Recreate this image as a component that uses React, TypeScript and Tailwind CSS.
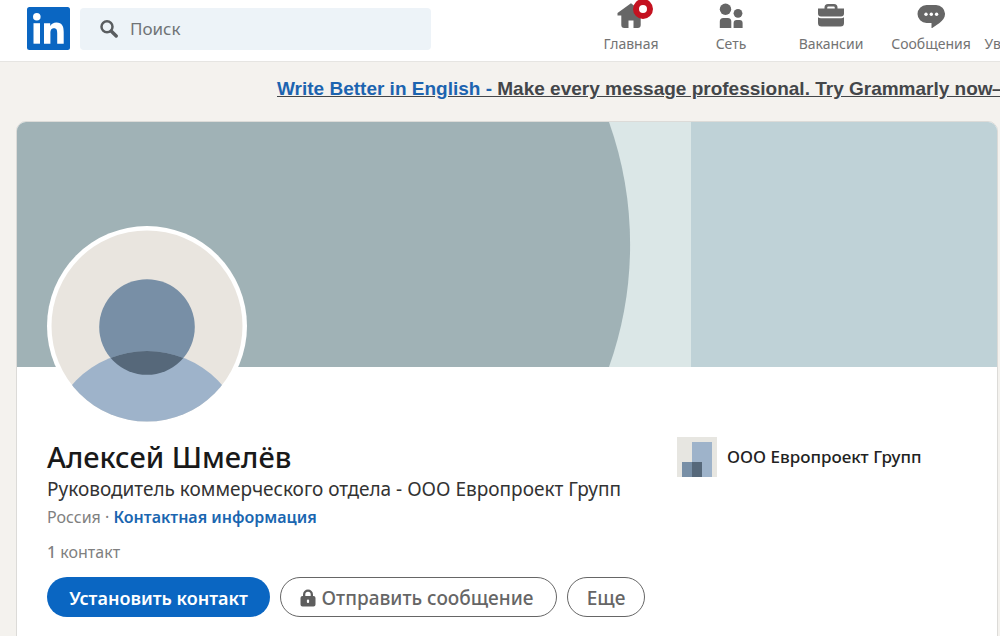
import React from 'react';

const navItems = [
  { label: 'Главная', icon: <HomeIcon />, hasBadge: true },
  { label: 'Сеть', icon: <NetworkIcon /> },
  { label: 'Вакансии', icon: <JobsIcon /> },
  { label: 'Сообщения', icon: <MessagesIcon /> },
  { label: 'Уведомления', icon: <BellIcon /> },
];

function Logo() {
  return (
    <svg viewBox="0 0 43 43" className="h-[43px] w-[43px]" aria-hidden="true">
      <rect width="43" height="43" rx="2.5" fill="#0a66c2" />
      <circle cx="9.8" cy="9.8" r="3.8" fill="#fff" />
      <path d="M6.500 16.200h6.500V36.700H6.500z" fill="#fff" />
      <path
        d="M17 16.200h6.200V19c1.200-2 3.400-3.400 6.200-3.400 5.800 0 7.300 3.900 7.300 9.400v11.700h-6.500V26.200c0-2.800-.4-5-3.200-5-3 0-3.600 2.300-3.600 5v10.500H17z"
        fill="#fff"
      />
    </svg>
  );
}

function SearchIcon() {
  return (
    <svg viewBox="0 0 18 18" className="h-[18px] w-[18px] shrink-0" aria-hidden="true">
      <circle cx="7" cy="6.800" r="5.500" fill="none" stroke="#5a5d60" strokeWidth="2.500" />
      <path d="M11.400 11.200l4.800 4.800" stroke="#5a5d60" strokeWidth="3.400" strokeLinecap="round" />
    </svg>
  );
}

function HomeIcon() {
  return (
    <svg viewBox="0 0 28 28" className="h-7 w-7" fill="#666" aria-hidden="true">
      <path d="M14 3.200L26.500 13v2.500h-2.800v9.500a3 3 0 0 1-3 3h-4.200v-7.500h-5V28H7.300a3 3 0 0 1-3-3v-9.500H0.500V13z" />
    </svg>
  );
}

function NetworkIcon() {
  return (
    <svg viewBox="0 0 28 28" className="h-7 w-7" fill="#666" aria-hidden="true">
      <circle cx="8.500" cy="9.300" r="5.700" />
      <circle cx="21" cy="13.300" r="4.400" />
      <path d="M2.800 29v-7.500a3.500 3.500 0 0 1 3.500-3.500h4.500a3.500 3.500 0 0 1 3.500 3.500V28.500H2.800zM16.600 28.500v-5.500a3 3 0 0 1 3-3h3a3 3 0 0 1 3 3v5.500z" />
    </svg>
  );
}

function JobsIcon() {
  return (
    <svg viewBox="0 0 28 28" className="h-7 w-7" fill="#666" aria-hidden="true">
      <path d="M7.500 8.500V7.500A3.500 3.500 0 0 1 11 4h6a3.500 3.500 0 0 1 3.500 3.500v1H27v5a3 3 0 0 1-3 3H4a3 3 0 0 1-3-3v-5zm2.700 0h7.600V7.700a1.200 1.200 0 0 0-1.200-1.200h-5.200a1.200 1.200 0 0 0-1.200 1.200z" />
      <path d="M1 17.200q1.200 1 3 1h20q1.800 0 3-1V23a3.500 3.500 0 0 1-3.500 3.500h-19A3.500 3.500 0 0 1 1 23z" />
    </svg>
  );
}

function MessagesIcon() {
  return (
    <svg viewBox="0 0 28 28" className="h-7 w-7" aria-hidden="true">
      <path d="M9.500 5h9.500a9 9 0 0 1 9 9.300c0 3.700-2.300 6.200-5.500 8.700L14.500 28.500V23H9.500a9 9 0 0 1 0-18z" fill="#666" />
      <circle cx="9" cy="14.300" r="1.700" fill="#fff" />
      <circle cx="14.300" cy="14.300" r="1.700" fill="#fff" />
      <circle cx="19.600" cy="14.300" r="1.700" fill="#fff" />
    </svg>
  );
}

function BellIcon() {
  return (
    <svg viewBox="0 0 28 28" className="h-7 w-7" fill="#666" aria-hidden="true">
      <path d="M14 3a8 8 0 0 1 8 8l2 10H4l2-10a8 8 0 0 1 8-8zM11 23h6a3 3 0 0 1-6 0z" />
    </svg>
  );
}

function LockIcon() {
  return (
    <svg viewBox="0 0 16 18" className="h-[18px] w-4" aria-hidden="true">
      <path
        d="M3 7V5.500a5 5 0 0 1 10 0V7h.5A2 2 0 0 1 15.500 9v6.500a2 2 0 0 1-2 2h-11a2 2 0 0 1-2-2V9a2 2 0 0 1 2-2zm2.300 0h5.400V5.500a2.700 2.700 0 0 0-5.400 0z"
        fill="#5e5e5e"
      />
      <rect x="6.900" y="10.500" width="2.200" height="3.500" rx="1" fill="#fff" />
    </svg>
  );
}

function Header() {
  return (
    <header className="flex items-start overflow-hidden border-b border-[#e6e5e2] bg-white">
      <div className="flex items-center gap-[10px] pt-[7px] pb-[11px] pl-[27px]">
        <a href="#" aria-label="LinkedIn">
          <Logo />
        </a>
        <label className="flex h-[42px] w-[351px] items-center gap-3 rounded bg-[#edf3f8] px-5">
          <SearchIcon />
          <input
            type="text"
            placeholder="Поиск"
            aria-label="Поиск"
            className="w-full bg-transparent text-[17px] text-[#666] outline-none placeholder:text-[#707376]"
          />
        </label>
      </div>
      <nav className="ml-[150px] flex">
        {navItems.map((item) => (
          <a
            key={item.label}
            href="#"
            className="flex w-[100px] shrink-0 flex-col items-center gap-1 text-[14px] leading-[23px] text-[#737373]"
          >
            <span className="relative">
              {item.icon}
              {item.hasBadge && (
                <span className="absolute -top-[1px] left-4 h-5 w-5 rounded-full border-[6px] border-[#c41220] bg-white" />
              )}
            </span>
            {item.label}
          </a>
        ))}
      </nav>
    </header>
  );
}

function Banner() {
  return (
    <svg viewBox="0 0 980 245" preserveAspectRatio="xMidYMid slice" className="block h-[245px] w-full" aria-hidden="true">
      <rect width="980" height="245" fill="#dbe7e7" />
      <path d="M0 0h592a366 366 0 0 1 0 245H0z" fill="#a0b2b6" />
      <rect x="674" width="306" height="245" fill="#bfd2d7" />
    </svg>
  );
}

function Avatar() {
  return (
    <svg viewBox="0 0 200 200" className="relative -mt-[141px] block h-[200px] w-[200px]" aria-hidden="true">
      <defs>
        <clipPath id="photo">
          <circle cx="100" cy="100" r="95.500" />
        </clipPath>
        <clipPath id="head">
          <circle cx="100" cy="101" r="47.800" />
        </clipPath>
      </defs>
      <circle cx="100" cy="100" r="100" fill="#fff" />
      <g clipPath="url(#photo)">
        <rect width="200" height="200" fill="#e9e5df" />
        <circle cx="100" cy="101" r="47.800" fill="#788fa6" />
        <circle cx="100" cy="225" r="100" fill="#9eb3ca" />
        <circle cx="100" cy="225" r="100" fill="#56687a" clipPath="url(#head)" />
      </g>
    </svg>
  );
}

function CompanyLogo() {
  return (
    <svg viewBox="0 0 40 40" className="h-10 w-10 shrink-0" aria-hidden="true">
      <rect width="40" height="40" fill="#e7e6e1" />
      <rect x="15" y="5" width="20" height="35" fill="#9eb3ca" />
      <rect x="5" y="25" width="10" height="15" fill="#788fa6" />
      <rect x="15" y="25" width="10" height="15" fill="#56687a" />
    </svg>
  );
}

function App() {
  return (
    <div className="min-h-screen overflow-hidden bg-[#f4f2ee] font-['Noto_Sans',sans-serif]">
      <Header />

      <a
        href="#"
        className="ml-[277px] block pt-3 pb-[18px] font-['Liberation_Sans',Arial,sans-serif] text-[19px] leading-[29px] font-bold whitespace-nowrap text-[#434649] underline"
      >
        <span className="text-[#1c64b0]">Write Better in English -</span> Make every message professional. Try Grammarly
        now—
      </a>

      <main className="mr-[2px] ml-4 overflow-hidden rounded-t-[10px] border border-[#dcdbd8] bg-white pb-10">
        <Banner />
        <div className="px-[30px]">
          <Avatar />
          <div className="mt-[11px] flex items-start justify-between">
            <section>
              <h1 className="text-[29px] leading-[39px] font-medium text-[#191919]">Алексей Шмелёв</h1>
              <p className="text-[19px] leading-[27px] text-[#333]">
                Руководитель коммерческого отдела - ООО Европроект Групп
              </p>
              <p className="text-[16px] leading-[28px] text-[#808080]">
                Россия ·{' '}
                <a href="#" className="font-semibold text-[#1a66b0]">
                  Контактная информация
                </a>
              </p>
              <p className="mt-2 text-[16px] leading-[26px] text-[#808080]">
                <span className="font-medium">1</span> контакт
              </p>
              <div className="mt-3 flex gap-[10px]">
                <button type="button" className="h-10 w-[223px] rounded-full bg-[#0a66c2] pt-[2px] text-[18px] font-semibold text-white">
                  Установить контакт
                </button>
                <button
                  type="button"
                  className="flex h-10 w-[277px] items-center justify-center gap-[6px] rounded-full border border-[#666] pt-[2px] pr-1 text-[19px] font-medium text-[#666]"
                >
                  <LockIcon />
                  Отправить сообщение
                </button>
                <button
                  type="button"
                  className="h-10 w-[78px] rounded-full border border-[#666] pt-[2px] text-[19px] font-medium text-[#666]"
                >
                  Еще
                </button>
              </div>
            </section>
            <a href="#" className="flex w-[290px] items-center gap-[10px] text-[17px] font-medium text-[#222]">
              <CompanyLogo />
              ООО Европроект Групп
            </a>
          </div>
        </div>
      </main>
    </div>
  );
}

export default App;
